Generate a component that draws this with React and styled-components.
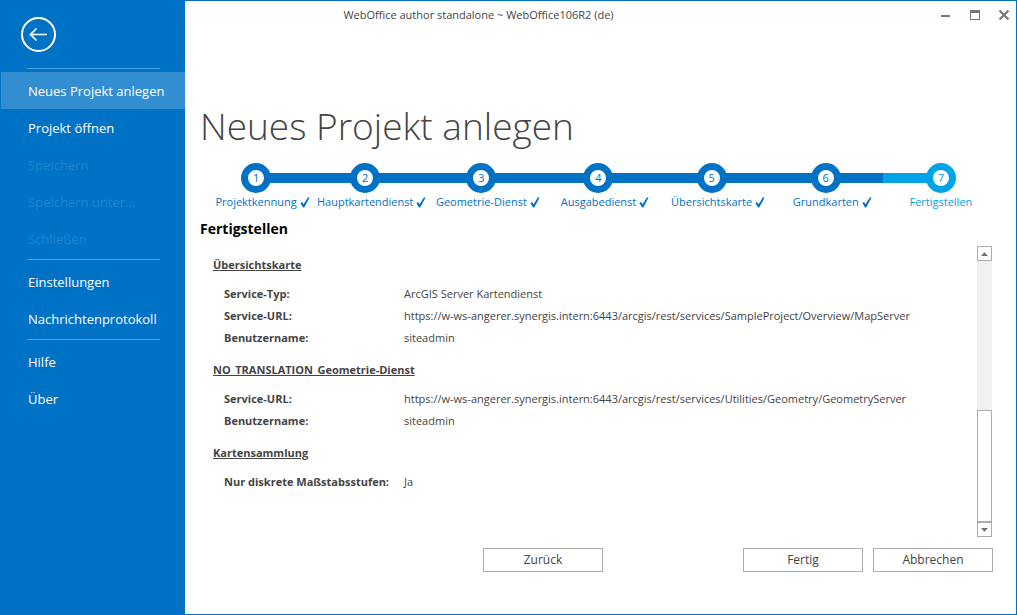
import React from "react";
import styled, { createGlobalStyle, css } from "styled-components";

const BLUE = "#0072c6";
const LIGHT_BLUE = "#00a2e8";
const TEXT = "#444444";
const BORDER = "#ababab";

const GlobalStyle = createGlobalStyle`
  *, *::before, *::after { box-sizing: border-box; }
  body {
    margin: 0;
    background: #ffffff;
    color: ${TEXT};
    font-family: "Open Sans", "Noto Sans", sans-serif;
    font-size: 11px;
    line-height: 16px;
  }
  button { font: inherit; color: inherit; cursor: pointer; }
`;

const Window = styled.div`
  display: flex;
  min-height: 100vh;
  border: 1px solid ${BLUE};
`;

const Sidebar = styled.nav`
  flex: 0 0 184px;
  background: ${BLUE};
  padding-top: 16px;
`;

const BackButton = styled.button`
  display: block;
  width: 36px;
  height: 36px;
  margin: 0 0 15px 20px;
  padding: 0;
  border: 0;
  background: none;

  svg { display: block; }
`;

const NavDivider = styled.hr`
  height: 1px;
  margin: 2px 25px 3px 26px;
  border: 0;
  background: #4c9cd7;
`;

const NavItem = styled.button`
  display: block;
  width: 100%;
  height: 37px;
  padding: 0 0 0 27px;
  border: 0;
  background: ${(p) => (p.$active ? "#338ed1" : "transparent")};
  color: #ffffff;
  font-size: 13px;
  text-align: left;
  white-space: nowrap;

  &:disabled {
    color: #1f83cd;
    cursor: default;
  }
`;

const Main = styled.main`
  flex: 1;
  min-width: 0;
  display: flex;
  flex-direction: column;
  padding-left: 15px;
`;

const TitleBar = styled.header`
  display: grid;
  grid-template-columns: 1fr auto;
  align-items: center;
  height: 27px;
  padding-right: 6px;
`;

const WindowTitle = styled.div`
  padding-right: 183px;
  text-align: center;
  white-space: nowrap;
`;

const WindowButtons = styled.div`
  display: flex;
  gap: 17px;
`;

const WindowButton = styled.button`
  width: 12px;
  height: 12px;
  padding: 0;
  border: 0;
  background: none;

  svg { display: block; }
`;

const PageTitle = styled.h1`
  margin: 71px 0 10px;
  font-size: 37px;
  font-weight: 300;
  line-height: 54px;
  white-space: nowrap;
`;

const Steps = styled.ol`
  display: grid;
  grid-template-columns: 108fr 110fr 122fr 112fr 114fr 114fr 116fr;
  margin: 0 17px 0 2px;
  padding: 0;
  list-style: none;
`;

const Step = styled.li`
  display: flex;
  flex-direction: column;
  align-items: center;
  gap: 1px;
  color: ${(p) => (p.$current ? LIGHT_BLUE : BLUE)};
`;

const Track = styled.div`
  display: grid;
  grid-template-columns: 1fr 30px 1fr;
  align-items: center;
  width: 100%;
`;

const Line = styled.span`
  height: 10px;
  margin: 0 -2px;
  background: ${(p) => (p.$hidden ? "transparent" : "currentColor")};
  ${(p) => (p.$side === "left" ? css`margin-left: 0;` : css`margin-right: 0;`)}
`;

const Dot = styled.span`
  display: grid;
  place-items: center;
  width: 30px;
  height: 30px;
  border: 7px solid currentColor;
  border-radius: 50%;
  background: #ffffff;
`;

const StepLabel = styled.span`
  position: relative;
  white-space: nowrap;
`;

const Check = styled.svg`
  position: absolute;
  left: 100%;
  top: 3px;
  margin-left: 3px;
`;

const SectionTitle = styled.h2`
  margin: 9px 0 7px;
  color: #000000;
  font-size: 14px;
  font-weight: 700;
  line-height: 20px;
`;

const Panel = styled.section`
  display: flex;
  flex: 1;
  min-height: 291px;
  padding-right: 24px;
`;

const Summary = styled.div`
  flex: 1;
  min-width: 0;
  padding: 8px 0 0 13px;
`;

const GroupTitle = styled.h3`
  margin: 0 0 7px;
  font-size: 11px;
  font-weight: 700;
  line-height: 22px;
  text-decoration: underline;
`;

const Details = styled.dl`
  display: grid;
  grid-template-columns: 180px 1fr;
  margin: 0 0 10px 11px;
  line-height: 22px;
  white-space: nowrap;

  dt { font-weight: 700; }
  dd { margin: 0; }
`;

const ScrollBar = styled.div`
  flex: 0 0 15px;
  display: flex;
  flex-direction: column;
  background: #f1f1f1;
`;

const ScrollButton = styled.button`
  display: grid;
  place-items: center;
  width: 15px;
  height: 15px;
  padding: 0;
  border: 1px solid ${BORDER};
  background: #ffffff;
`;

const ScrollThumb = styled.div`
  height: 112px;
  margin-top: auto;
  border: 1px solid ${BORDER};
  background: #ffffff;
`;

const Footer = styled.footer`
  display: flex;
  justify-content: flex-end;
  gap: 10px;
  padding: 11px 23px 42px 0;
`;

const ActionButton = styled.button`
  width: 120px;
  height: 24px;
  padding: 0;
  border: 1px solid ${BORDER};
  background: #ffffff;
  font-size: 12px;
  margin-right: ${(p) => (p.$apart ? "130px" : "0")};
`;

const steps = [
  "Projektkennung",
  "Hauptkartendienst",
  "Geometrie-Dienst",
  "Ausgabedienst",
  "Übersichtskarte",
  "Grundkarten",
  "Fertigstellen",
];

const groups = [
  {
    title: "Übersichtskarte",
    rows: [
      ["Service-Typ:", "ArcGIS Server Kartendienst"],
      [
        "Service-URL:",
        "https://w-ws-angerer.synergis.intern:6443/arcgis/rest/services/SampleProject/Overview/MapServer",
      ],
      ["Benutzername:", "siteadmin"],
    ],
  },
  {
    title: "NO_TRANSLATION_Geometrie-Dienst",
    rows: [
      [
        "Service-URL:",
        "https://w-ws-angerer.synergis.intern:6443/arcgis/rest/services/Utilities/Geometry/GeometryServer",
      ],
      ["Benutzername:", "siteadmin"],
    ],
  },
  {
    title: "Kartensammlung",
    rows: [["Nur diskrete Maßstabsstufen:", "Ja"]],
  },
];

export default function App() {
  const last = steps.length - 1;
  return (
    <>
      <GlobalStyle />
      <Window>
        <Sidebar>
          <BackButton aria-label="Zurück">
            <svg width="36" height="36" viewBox="0 0 36 36" fill="none" stroke="#fff">
              <circle cx="17.5" cy="17.5" r="16.5" strokeWidth="2" />
              <path d="M10 17.5H26M15.5 11.5l-6 6 6 6" strokeWidth="1.7" />
            </svg>
          </BackButton>
          <NavDivider />
          <NavItem $active>Neues Projekt anlegen</NavItem>
          <NavItem>Projekt öffnen</NavItem>
          <NavItem disabled>Speichern</NavItem>
          <NavItem disabled>Speichern unter...</NavItem>
          <NavItem disabled>Schließen</NavItem>
          <NavDivider />
          <NavItem>Einstellungen</NavItem>
          <NavItem>Nachrichtenprotokoll</NavItem>
          <NavDivider />
          <NavItem>Hilfe</NavItem>
          <NavItem>Über</NavItem>
        </Sidebar>

        <Main>
          <TitleBar>
            <WindowTitle>WebOffice author standalone ~ WebOffice106R2 (de)</WindowTitle>
            <WindowButtons>
              <WindowButton aria-label="Minimieren">
                <svg width="12" height="12" viewBox="0 0 12 12">
                  <path d="M1 6h9v2H1z" fill="#777" />
                </svg>
              </WindowButton>
              <WindowButton aria-label="Maximieren">
                <svg width="12" height="12" viewBox="0 0 12 12">
                  <path d="M1 1h10v10H1zM2 4v6h8V4z" fill="#777" fillRule="evenodd" />
                </svg>
              </WindowButton>
              <WindowButton aria-label="Schließen">
                <svg width="12" height="12" viewBox="0 0 12 12">
                  <path d="M1.5 1.5l9 9M10.5 1.5l-9 9" stroke="#777" strokeWidth="2.2" />
                </svg>
              </WindowButton>
            </WindowButtons>
          </TitleBar>

          <PageTitle>Neues Projekt anlegen</PageTitle>

          <Steps>
            {steps.map((name, i) => (
              <Step key={name} $current={i === last}>
                <Track>
                  <Line $side="left" $hidden={i === 0} />
                  <Dot>{i + 1}</Dot>
                  <Line $side="right" $hidden={i === last} />
                </Track>
                <StepLabel>
                  {name}
                  {i !== last && (
                    <Check width="10" height="11" viewBox="0 0 10 11" aria-hidden="true">
                      <path d="M0.4 6L2 5 3.6 7.2 7.8 0.6 9.6 0.6 4.2 10.4 3 10.4z" fill="currentColor" />
                    </Check>
                  )}
                </StepLabel>
              </Step>
            ))}
          </Steps>

          <SectionTitle>Fertigstellen</SectionTitle>

          <Panel>
            <Summary>
              {groups.map((g) => (
                <React.Fragment key={g.title}>
                  <GroupTitle>{g.title}</GroupTitle>
                  <Details>
                    {g.rows.map(([label, value]) => (
                      <React.Fragment key={label}>
                        <dt>{label}</dt>
                        <dd>{value}</dd>
                      </React.Fragment>
                    ))}
                  </Details>
                </React.Fragment>
              ))}
            </Summary>
            <ScrollBar>
              <ScrollButton aria-label="Nach oben">
                <svg width="7" height="4" viewBox="0 0 7 4">
                  <path d="M3.5 0L7 4H0z" fill="#777" />
                </svg>
              </ScrollButton>
              <ScrollThumb />
              <ScrollButton aria-label="Nach unten">
                <svg width="7" height="4" viewBox="0 0 7 4">
                  <path d="M3.5 4L7 0H0z" fill="#777" />
                </svg>
              </ScrollButton>
            </ScrollBar>
          </Panel>

          <Footer>
            <ActionButton $apart>Zurück</ActionButton>
            <ActionButton>Fertig</ActionButton>
            <ActionButton>Abbrechen</ActionButton>
          </Footer>
        </Main>
      </Window>
    </>
  );
}
